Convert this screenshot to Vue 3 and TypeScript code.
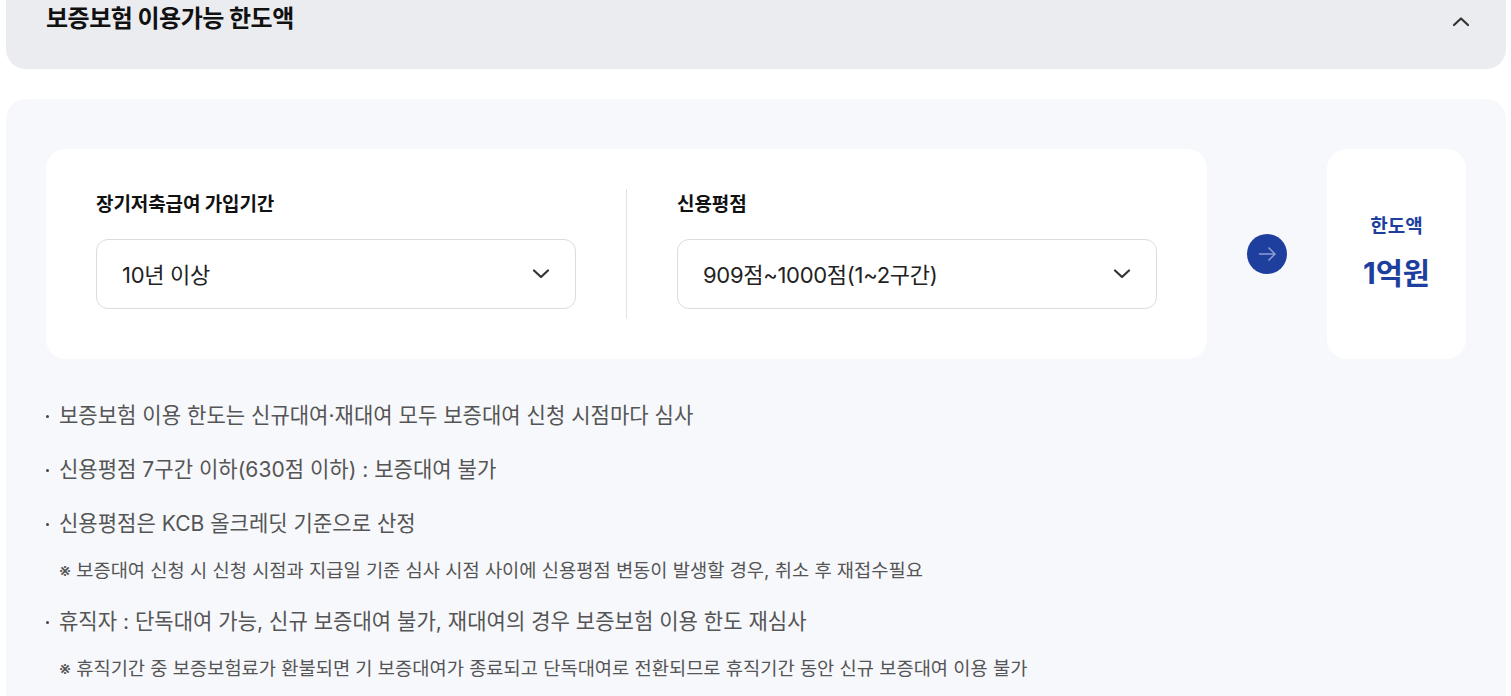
<script setup lang="ts">
interface Note {
  text: string
  sub?: string
}

const notes: Note[] = [
  { text: '보증보험 이용 한도는 신규대여·재대여 모두 보증대여 신청 시점마다 심사' },
  { text: '신용평점 7구간 이하(630점 이하) : 보증대여 불가' },
  {
    text: '신용평점은 KCB 올크레딧 기준으로 산정',
    sub: '※ 보증대여 신청 시 신청 시점과 지급일 기준 심사 시점 사이에 신용평점 변동이 발생할 경우, 취소 후 재접수필요'
  },
  {
    text: '휴직자 : 단독대여 가능, 신규 보증대여 불가, 재대여의 경우 보증보험 이용 한도 재심사',
    sub: '※ 휴직기간 중 보증보험료가 환불되면 기 보증대여가 종료되고 단독대여로 전환되므로 휴직기간 동안 신규 보증대여 이용 불가'
  }
]

const fields = [
  { label: '장기저축급여 가입기간', value: '10년 이상' },
  { label: '신용평점', value: '909점~1000점(1~2구간)' }
]
</script>

<template>
  <div class="page">
    <div class="accordion-head">
      <h2 class="accordion-title">보증보험 이용가능 한도액</h2>
      <svg class="chevron-up" width="20" height="12" viewBox="0 0 20 12" fill="none">
        <path d="M3 10 L10 3.5 L17 10" stroke="#333" stroke-width="2.2" stroke-linecap="round" stroke-linejoin="round" />
      </svg>
    </div>

    <div class="panel">
      <div class="calc-row">
        <div class="calc-card">
          <template v-for="(field, index) in fields" :key="field.label">
            <div v-if="index > 0" class="divider"></div>
            <div class="field">
              <div class="field-label">{{ field.label }}</div>
              <div class="select-box">
                <span class="select-value">{{ field.value }}</span>
                <svg width="20" height="12" viewBox="0 0 20 12" fill="none">
                  <path d="M3 2.5 L10 9 L17 2.5" stroke="#333" stroke-width="2.2" stroke-linecap="round" stroke-linejoin="round" />
                </svg>
              </div>
            </div>
          </template>
        </div>

        <div class="arrow-slot">
          <div class="arrow-circle">
            <svg width="20" height="20" viewBox="0 0 20 20" fill="none">
              <path d="M2 10 H18 M11.5 3.5 L18 10 L11.5 16.5" stroke="#8f9ecf" stroke-width="1.5" />
            </svg>
          </div>
        </div>

        <div class="result-card">
          <div class="result-label">한도액</div>
          <div class="result-value">1억원</div>
        </div>
      </div>

      <ul class="notes">
        <li v-for="note in notes" :key="note.text" class="note">
          <div class="note-text">{{ note.text }}</div>
          <div v-if="note.sub" class="note-sub">{{ note.sub }}</div>
        </li>
      </ul>
    </div>
  </div>
</template>

<style>
html,
body {
  margin: 0;
  background: #fff;
  overflow: hidden;
}
</style>

<style scoped>
.page {
  width: 1500px;
  height: 696px;
  margin-left: 6px;
  overflow: hidden;
  font-family: Inter, 'Noto Sans CJK KR', sans-serif;
}

.accordion-head {
  box-sizing: border-box;
  height: 69px;
  padding: 0 35px 0 40px;
  background: #ebecf0;
  border-radius: 0 0 20px 20px;
  display: flex;
  justify-content: space-between;
  align-items: flex-start;
}

.accordion-title {
  margin: 0;
  font-size: 24px;
  font-weight: 700;
  line-height: 38px;
  letter-spacing: -0.5px;
  color: #111;
}

.chevron-up {
  margin-top: 15px;
}

.panel {
  margin-top: 30px;
  padding: 50px 40px;
  background: #f7f8fc;
  border-radius: 20px 20px 0 0;
}

.calc-row {
  display: flex;
}

.calc-card {
  box-sizing: border-box;
  width: 1161px;
  height: 210px;
  padding: 40px 50px;
  background: #fff;
  border-radius: 20px;
  display: flex;
  gap: 50px;
}

.divider {
  width: 1px;
  background: #e2e2e2;
}

.field {
  width: 480px;
}

.field-label {
  padding-top: 1px;
  font-size: 19px;
  font-weight: 700;
  line-height: 30px;
  letter-spacing: -0.1px;
  color: #111;
  margin-bottom: 19px;
}

.select-box {
  box-sizing: border-box;
  height: 70px;
  padding: 0 24px 0 25px;
  background: #fff;
  border: 1px solid #dcdcdc;
  border-radius: 12px;
  display: flex;
  justify-content: space-between;
  align-items: center;
  font-size: 22px;
  letter-spacing: -0.3px;
  color: #222;
}

.select-value {
  margin-bottom: 2px;
}

.arrow-slot {
  width: 120px;
  display: flex;
  justify-content: center;
  align-items: center;
}

.arrow-circle {
  width: 40px;
  height: 40px;
  border-radius: 50%;
  background: #1f3f9e;
  display: flex;
  justify-content: center;
  align-items: center;
}

.result-card {
  box-sizing: border-box;
  width: 139px;
  height: 210px;
  padding-bottom: 3px;
  background: #fff;
  border-radius: 20px;
  display: flex;
  flex-direction: column;
  justify-content: center;
  align-items: center;
  color: #1f3f9e;
  gap: 11px;
}

.result-label {
  font-size: 19px;
  font-weight: 700;
  line-height: 30px;
}

.result-value {
  font-size: 29.5px;
  font-weight: 700;
  line-height: 40px;
}

.notes {
  list-style: none;
  margin: 41px 0 0;
  padding: 0;
}

.note {
  position: relative;
  padding-left: 13px;
  margin-bottom: 22px;
  color: #555;
}

.note::before {
  content: '';
  position: absolute;
  left: 0;
  top: 15px;
  width: 3px;
  height: 3px;
  border-radius: 50%;
  background: #444;
}

.note-text {
  font-size: 21.05px;
  line-height: 32px;
}

.note-sub {
  margin-top: 18px;
  font-size: 18.72px;
  line-height: 26px;
}
</style>
